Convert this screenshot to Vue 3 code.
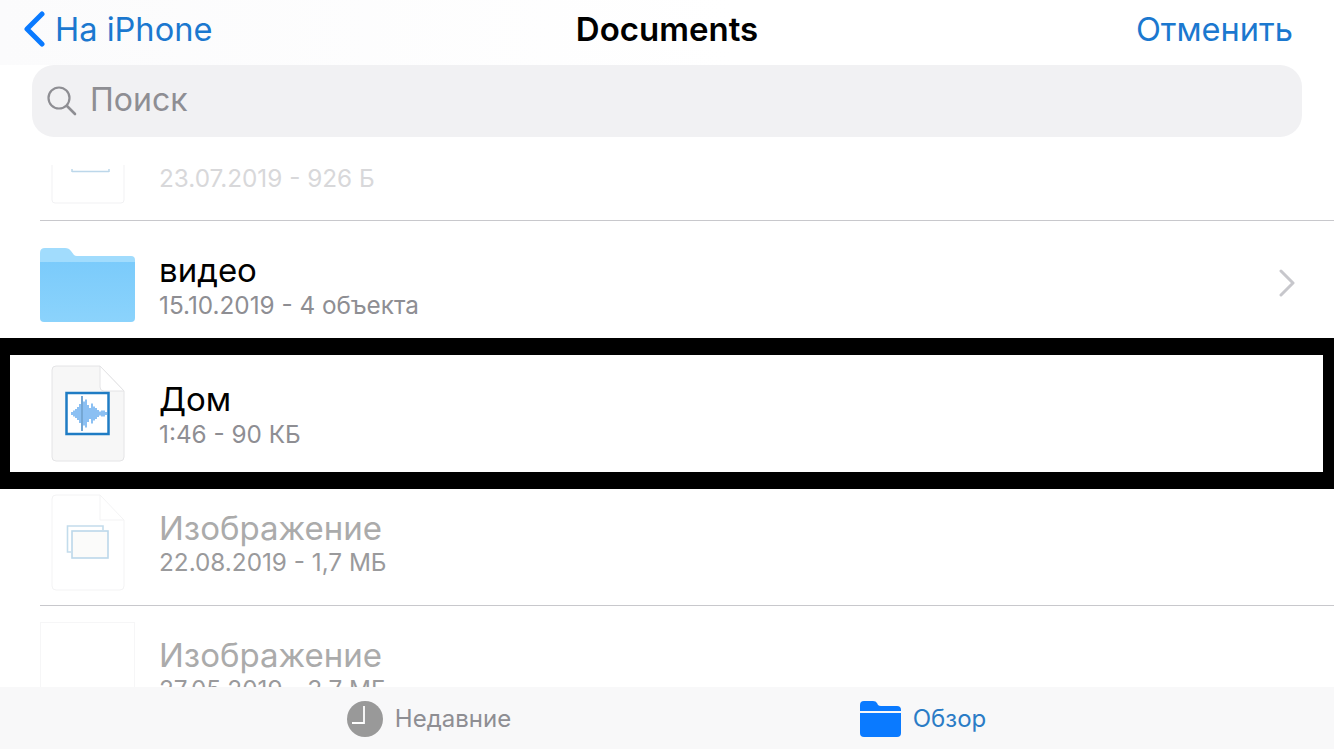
<script setup>
const waveBars = [
  [21, 3], [23, 6], [25, 9], [27, 13], [29, 19], [33, 24], [35, 28], [37, 17], [39, 11], [41, 20],
  [43, 14], [45, 11], [47, 7], [49, 4], [51, 6], [53, 6], [55, 3],
]
</script>

<template>
  <div class="page">
    <header class="nav">
      <div class="back">
        <svg class="chevron" width="24" height="36" viewBox="0 0 24 36">
          <path d="M20 3 L5 18 L20 33" fill="none" stroke="#0a7aff" stroke-width="5" stroke-linecap="round" stroke-linejoin="round" />
        </svg>
        <span>На iPhone</span>
      </div>
      <div class="title">Documents</div>
      <div class="cancel">Отменить</div>
    </header>

    <div class="search">
      <svg width="32" height="32" viewBox="0 0 32 32">
        <circle cx="13" cy="13" r="10.5" fill="none" stroke="#8e8e93" stroke-width="2.2" />
        <path d="M21 21 L29 29" stroke="#8e8e93" stroke-width="2.6" stroke-linecap="round" />
      </svg>
      <span>Поиск</span>
    </div>

    <main class="list">
      <div class="row row-cut">
        <div class="icon-slot">
          <svg class="cut-file" width="74" height="39" viewBox="0 0 74 39">
            <path d="M1 0 V35 Q1 38 4 38 H70 Q73 38 73 35 V0" fill="#fff" stroke="#f1f1f3" />
            <path d="M21 6.5 H58 M21 4 V7 M58 4 V7" fill="none" stroke="#bcd7ea" stroke-width="1.5" />
          </svg>
        </div>
        <div class="text">
          <div class="sub sub-pale">23.07.2019 - 926 Б</div>
        </div>
      </div>

      <div class="row row-folder">
        <svg class="folder" width="96" height="76" viewBox="0 0 96 76">
          <defs>
            <linearGradient id="folderFront" x1="0" y1="0" x2="0" y2="1">
              <stop offset="0" stop-color="#7bcbfb" />
              <stop offset="1" stop-color="#8bd3fc" />
            </linearGradient>
          </defs>
          <path d="M0 6 Q0 1 5 1 H25 Q29 1 31 4 L34 8 Q35 9 37 9 H91 Q95 9 95 13 V20 H0 Z" fill="#a1dcfd" />
          <path d="M0 15 H95 V71 Q95 75 91 75 H4 Q0 75 0 71 Z" fill="url(#folderFront)" />
        </svg>
        <div class="text">
          <div class="name">видео</div>
          <div class="sub">15.10.2019 - 4 объекта</div>
        </div>
        <svg class="disclosure" width="18" height="28" viewBox="0 0 18 28">
          <path d="M3 2 L15 14 L3 26" fill="none" stroke="#c7c7cc" stroke-width="3" stroke-linecap="round" stroke-linejoin="round" />
        </svg>
      </div>

      <div class="row row-marked">
        <div class="icon-slot">
          <svg width="74" height="97" viewBox="0 0 74 97">
            <path d="M5 1 H49 L73 26 V92 Q73 96 69 96 H5 Q1 96 1 92 V5 Q1 1 5 1 Z" fill="#f7f7f7" stroke="#e4e4e6" />
            <path d="M49 1 V22 Q49 26 53 26 H73 Z" fill="#fff" stroke="#e4e4e6" />
            <rect x="15.5" y="28" width="42" height="41" fill="#fff" stroke="#1f7cc4" stroke-width="2.5" />
            <g stroke="#5aa5ee" stroke-width="1.4">
              <line v-for="bar in waveBars" :key="bar[0]" :x1="bar[0]" :x2="bar[0]" :y1="48.5 - bar[1] / 2" :y2="48.5 + bar[1] / 2" />
            </g>
            <line x1="31" x2="31" y1="31" y2="66" stroke="#2a78bd" stroke-width="1.3" />
          </svg>
        </div>
        <div class="text">
          <div class="name">Дом</div>
          <div class="sub">1:46 - 90 КБ</div>
        </div>
      </div>

      <div class="row row-dim">
        <div class="icon-slot">
          <svg width="74" height="97" viewBox="0 0 74 97">
            <path d="M5 1 H49 L73 26 V92 Q73 96 69 96 H5 Q1 96 1 92 V5 Q1 1 5 1 Z" fill="#fff" stroke="#f3f3f4" />
            <path d="M49 1 V26 H73" fill="none" stroke="#f3f3f4" />
            <path d="M20 58 H16.5 V32 H52 V36" fill="none" stroke="#c3dcec" stroke-width="1.6" />
            <rect x="21" y="37" width="36" height="27" fill="#fbfbfa" stroke="#bcd8ea" stroke-width="1.6" />
          </svg>
        </div>
        <div class="text">
          <div class="name">Изображение</div>
          <div class="sub">22.08.2019 - 1,7 МБ</div>
        </div>
      </div>

      <div class="row row-last">
        <div class="blank-thumb"></div>
        <div class="text">
          <div class="name">Изображение</div>
          <div class="sub">27.05.2019 - 3,7 МБ</div>
        </div>
      </div>
    </main>

    <footer class="tabs">
      <div class="tab">
        <svg width="36" height="36" viewBox="0 0 36 36">
          <circle cx="18" cy="18" r="18" fill="#999" />
          <path d="M17 5 V22 H5" fill="none" stroke="#fff" stroke-width="1.8" />
        </svg>
        <span>Недавние</span>
      </div>
      <div class="tab tab-active">
        <svg width="41" height="36" viewBox="0 0 41 36">
          <path d="M0 4 Q0 0 4 0 H13 Q16 0 17 2 L18 4 Q19 5 21 5 H37 Q41 5 41 9 V10 H0 Z" fill="#0a7aff" />
          <path d="M0 12 H41 V32 Q41 36 37 36 H4 Q0 36 0 32 Z" fill="#0a7aff" />
        </svg>
        <span>Обзор</span>
      </div>
    </footer>
  </div>
</template>

<style scoped>
.page {
  display: flex;
  flex-direction: column;
  width: 1334px;
  height: 749px;
  overflow: hidden;
  background: #fff;
  font-family: Inter, "Noto Sans", sans-serif;
}
.nav {
  display: grid;
  grid-template-columns: 1fr auto 1fr;
  align-items: center;
  height: 65px;
  padding: 0 22px 8px;
  box-sizing: border-box;
  background: linear-gradient(90deg, #fbfbfc, #fff 55%);
  font-size: 32.6px;
  color: #1b78cf;
}
.back {
  display: flex;
  align-items: center;
  gap: 9px;
}
.title {
  font-size: 33px;
  font-weight: 600;
  color: #000;
}
.cancel {
  justify-self: end;
  margin-right: 19px;
}
.search {
  display: flex;
  align-items: center;
  gap: 12px;
  height: 72px;
  margin: 0 32px;
  padding: 0 0 0 14px;
  flex-shrink: 0;
  border-radius: 22px;
  background: #f1f1f3;
  font-size: 32px;
  color: #8e8e93;
}
.search span {
  margin-bottom: 4px;
}
.list {
  flex: 1;
  min-height: 0;
  overflow: hidden;
}
.row {
  display: flex;
  align-items: center;
  box-sizing: border-box;
}
.icon-slot {
  display: flex;
  justify-content: center;
  width: 74px;
  margin: 0 34px 0 11px;
  flex-shrink: 0;
}
.text {
  flex: 1;
}
.name {
  font-size: 33px;
  line-height: 38px;
  color: #000;
}
.sub {
  margin-top: 1px;
  font-size: 24.3px;
  line-height: 28px;
  color: #8e8e93;
}
.row-cut {
  align-items: flex-end;
  height: 84px;
  margin-left: 40px;
  padding-bottom: 16px;
  border-bottom: 1px solid #c8c8cc;
}
.sub-pale {
  padding-bottom: 12px;
  color: #d8d8da;
}
.row-folder {
  height: 117px;
  margin-left: 40px;
  padding: 10px 38px 0 0;
}
.row-folder .sub {
  margin-top: 2px;
}
.folder {
  margin-right: 23px;
  flex-shrink: 0;
}
.disclosure {
  margin-bottom: 4px;
}
.row-marked {
  height: 151px;
  border: solid #000;
  border-width: 17px 11px 17px 10px;
  padding-left: 30px;
}
.row-marked .sub {
  margin-top: 2px;
}
.row-dim {
  height: 117px;
  margin-left: 40px;
  padding-bottom: 10px;
  border-bottom: 1px solid #c8c8cc;
}
.row-dim .name,
.row-last .name {
  color: #ababab;
}
.row-dim .sub,
.row-last .sub {
  color: #9a9a9c;
}
.row-last {
  align-items: flex-start;
  height: 120px;
  margin-left: 40px;
  padding-top: 30px;
}
.blank-thumb {
  width: 95px;
  height: 95px;
  margin: -14px 24px 0 0;
  flex-shrink: 0;
  border: 1px solid #f6f6f7;
  box-sizing: border-box;
}
.tabs {
  display: grid;
  grid-template-columns: 494px 494px;
  height: 62px;
  padding: 1px 165px 0 182px;
  box-sizing: border-box;
  flex-shrink: 0;
  background: #f8f8f9;
  font-size: 24px;
  color: #8e8e93;
}
.tab {
  display: flex;
  align-items: center;
  justify-content: center;
  gap: 12px;
}
.tab-active {
  color: #2b7cc6;
}
</style>
